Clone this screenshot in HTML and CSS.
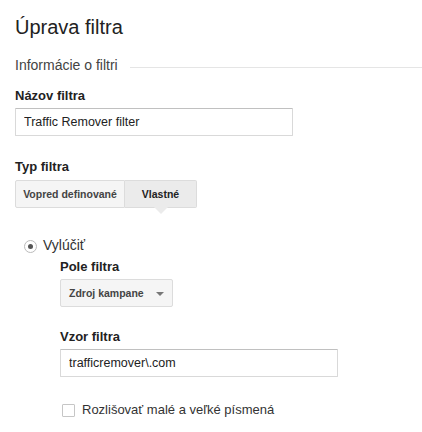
FILE: index.html
```html
<!DOCTYPE html>
<html>
<head>
    <meta charset="UTF-8">
    <title>Úprava filtra</title>
    <link rel="stylesheet" href="styles.css">
</head>
<body>
    <div id="filter-container">
        <h1 class="page-title">Úprava filtra</h1>

        <div class="section-head">
            <span>Informácie o filtri</span>
            <div class="section-line"></div>
        </div>

        <label class="field-label name-label" for="filter-name">Názov filtra</label>
        <input id="filter-name" class="text-input" type="text" value="Traffic Remover filter">

        <div class="field-label type-label">Typ filtra</div>
        <div class="tab-row">
            <button class="tab-button tab-predef">Vopred definované</button>
            <button class="tab-button tab-custom active">Vlastné</button>
        </div>

        <div class="radio-row">
            <span class="radio checked"></span>
            <span>Vylúčiť</span>
        </div>

        <div class="nested">
            <div class="field-label pole-label">Pole filtra</div>
            <button class="dropdown">Zdroj kampane <span class="caret"></span></button>

            <label class="field-label pattern-label" for="filter-pattern">Vzor filtra</label>
            <input id="filter-pattern" class="text-input" type="text" value="trafficremover\.com">

            <div class="check-row">
                <span class="checkbox"></span>
                <span>Rozlišovať malé a veľké písmená</span>
            </div>
        </div>
    </div>
</body>
</html>
```

FILE: styles.css
```css
body {
    margin: 0;
    background-color: #fff;
    font-family: "Liberation Sans", Arial, sans-serif;
    color: #222;
}

#filter-container {
    padding: 15px 0 0 15px;
}

.page-title {
    margin: 0;
    font-size: 20px;
    line-height: 24px;
    font-weight: normal;
    color: #222;
}

.section-head {
    display: flex;
    align-items: center;
    margin-top: 18px;
    font-size: 14px;
    line-height: 17px;
    color: #444;
}

.section-line {
    flex: 1;
    height: 1px;
    margin: 3px 0 0 12px;
    background-color: #e5e5e5;
}

.field-label {
    display: block;
    font-size: 13px;
    line-height: 16px;
    font-weight: bold;
    color: #222;
}

.name-label {
    margin-top: 14px;
}

.text-input {
    display: block;
    box-sizing: border-box;
    width: 278px;
    height: 28px;
    margin-top: 4px;
    padding: 0 8px;
    border: 1px solid #d9d9d9;
    border-top-color: #c0c0c0;
    border-radius: 1px;
    font-family: inherit;
    font-size: 12.5px;
    color: #222;
    outline: none;
}

.type-label {
    margin-top: 23px;
}

.tab-row {
    display: flex;
    margin-top: 5px;
}

.tab-button {
    position: relative;
    height: 28px;
    padding: 0;
    border: 1px solid #dcdcdc;
    background-color: #f5f5f5;
    font-family: inherit;
    font-size: 10.5px;
    font-weight: bold;
    color: #444;
    cursor: pointer;
}

.tab-predef {
    width: 110px;
    border-radius: 2px 0 0 2px;
}

.tab-custom {
    width: 72px;
    border-left: none;
    border-radius: 0 2px 2px 0;
}

.tab-button.active {
    background-color: #ebebeb;
    color: #222;
}

.tab-button.active::after {
    content: "";
    position: absolute;
    left: 50%;
    top: 100%;
    margin-left: -7px;
    border-left: 7px solid transparent;
    border-right: 7px solid transparent;
    border-top: 7px solid #ebebeb;
}

.radio-row {
    display: flex;
    align-items: center;
    margin: 29px 0 0 9px;
    font-size: 14px;
    line-height: 17px;
    color: #333;
}

.radio {
    position: relative;
    box-sizing: border-box;
    width: 13px;
    height: 13px;
    margin: 1px 6px 0 0;
    border: 1px solid #bbb;
    border-radius: 50%;
    background-color: #fff;
}

.radio.checked::after {
    content: "";
    position: absolute;
    left: 3px;
    top: 3px;
    width: 5px;
    height: 5px;
    border-radius: 50%;
    background-color: #555;
}

.nested {
    padding-left: 45px;
}

.pole-label {
    margin-top: 5px;
}

.dropdown {
    display: flex;
    align-items: center;
    box-sizing: border-box;
    height: 28px;
    margin-top: 4px;
    padding: 0 8px;
    border: 1px solid #dcdcdc;
    border-radius: 2px;
    background-color: #f5f5f5;
    font-family: inherit;
    font-size: 10.5px;
    font-weight: bold;
    color: #444;
    cursor: pointer;
}

.caret {
    width: 0;
    height: 0;
    margin: 2px 0 0 12px;
    border-left: 4px solid transparent;
    border-right: 4px solid transparent;
    border-top: 4px solid #777;
}

.pattern-label {
    margin-top: 22px;
}

.check-row {
    display: flex;
    align-items: center;
    margin-top: 25px;
    font-size: 13px;
    line-height: 16px;
    color: #333;
}

.checkbox {
    box-sizing: border-box;
    width: 13px;
    height: 13px;
    margin: 0 7px 0 2px;
    border: 1px solid #c6c6c6;
    border-radius: 1px;
    background-color: #fff;
}
```
